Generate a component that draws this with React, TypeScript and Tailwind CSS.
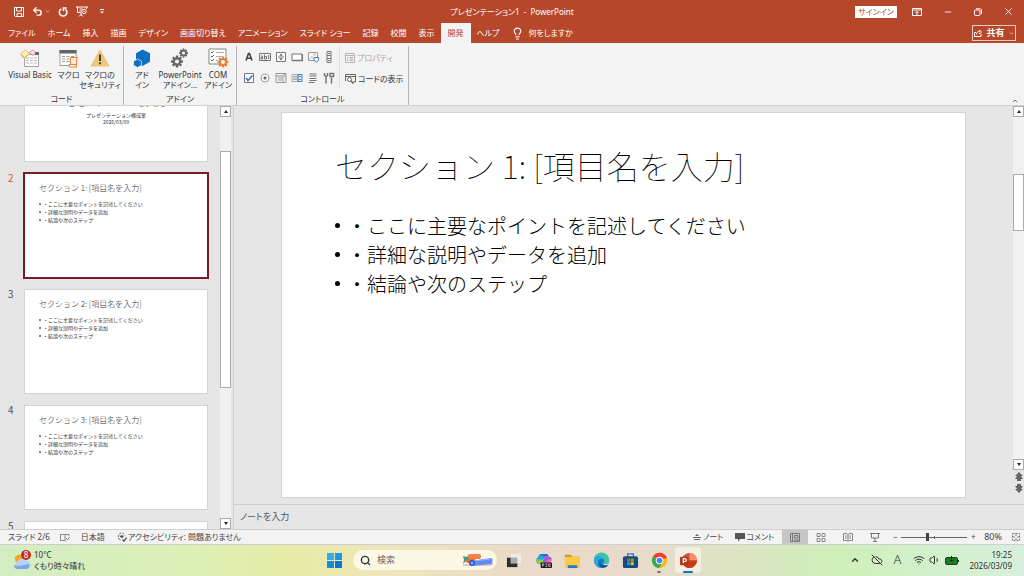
import type { ReactNode } from "react";
import clsx from "clsx";
import {
  ChevronDown,
  ChevronUp,
  CloudOff,
  Lightbulb,
  Minus,
  Search,
  Undo2,
  Volume1,
  Wifi,
  X,
} from "lucide-react";

const tabs = [
  "ファイル",
  "ホーム",
  "挿入",
  "描画",
  "デザイン",
  "画面切り替え",
  "アニメーション",
  "スライド ショー",
  "記録",
  "校閲",
  "表示",
  "開発",
  "ヘルプ",
];

const points = [
  "・ここに主要なポイントを記述してください",
  "・詳細な説明やデータを追加",
  "・結論や次のステップ",
];

const SaveIcon = () => (
  <svg viewBox="0 0 10 10" className="size-[10px]" fill="none" stroke="currentColor">
    <path d="M.5.5h9v9h-8l-1-1z" />
    <path d="M2.5.5v3.5h5V.5M3 9.500V6.500h4.500v3" />
  </svg>
);

const RedoIcon = () => (
  <svg viewBox="0 0 10 10" className="size-[10px]" fill="none" stroke="currentColor" strokeWidth="1.500">
    <path d="M3.200 2A3.800 3.800 0 1 0 7.500 2.300" />
    <path d="M5.500 4V1h3.200" />
  </svg>
);

const SlideShowIcon = () => (
  <svg viewBox="0 0 12 11" className="h-[11px] w-3" fill="none" stroke="currentColor">
    <path d="M0 1h12M1.500 1v5.500h3M10.500 1v2M3.500 3h3M3.500 5h2M5 6.500v3M3 10.500l2-2 2 2" />
    <circle cx="8" cy="5.500" r="2.200" />
    <path d="M7.500 4.500v2l1.500-1z" fill="currentColor" stroke="none" />
  </svg>
);

const VisualBasicIcon = () => (
  <svg viewBox="0 0 20 19" className="h-[19px] w-5">
    <path d="M4.500 5.500h14v12h-14z" fill="#fff" stroke="#a5a5a5" />
    <path d="M11 3h8v3h-8z" fill="#666" />
    <path d="M6 9h11M6 11.500h11M6 14h11" stroke="#b8b8b8" strokeDasharray="3 1" />
    <path d="M5.500 1l4 3.500-5 4.500-4-4z" fill="#fff3d6" stroke="#e8b85a" />
    <path d="M1 5.500L4.500 9 9 5" fill="none" stroke="#e8b85a" strokeWidth="1.500" />
    <path d="M11.500 1.500c2-1 4 1 3.500 3L13 6.500 9.500 3.500z" fill="#fbe3ea" stroke="#e0839e" />
  </svg>
);

const MacroIcon = () => (
  <svg viewBox="0 0 20 19" className="h-[19px] w-5">
    <path d="M1 1.500h16v15H1z" fill="#fff" stroke="#a0a0a0" />
    <path d="M.5 1h17v3.500H.5z" fill="#666" />
    <path d="M3 7.500h3M7.500 7.500h3M12 7.500h3M3 10h3M7.500 10h3M3 12.500h3M7.500 12.500h3" stroke="#999" />
    <path d="M11.500 8.500h7c-1 1.500-1 3-1 5.500v3.500h-6z" fill="#fdebdc" stroke="#e8823a" />
    <path d="M10 15.500h7c0 2 1 2.500 1 2.500h-7.500z" fill="#fff" stroke="#e8823a" />
  </svg>
);

const WarningIcon = () => (
  <svg viewBox="0 0 20 18" className="h-[18px] w-5">
    <path d="M10 1L19 17H1z" fill="#eec679" stroke="#eec679" strokeLinejoin="round" />
    <path d="M10 5.500V12M10 13.300v2" stroke="#333" strokeWidth="1.800" />
  </svg>
);

const AddInIcon = () => (
  <svg viewBox="0 0 18 19" className="h-[19px] w-[18px]" fill="#0f6fc5">
    <path d="M9.500.5L17 4.300v8.400L9.500 17 3 13V4.300z" />
    <path d="M4.500 10l4 2.200v4L4.500 18.500.500 16.200v-4z" stroke="#f3f3f3" strokeWidth=".7" />
  </svg>
);

const Cog = ({ x, y, r, color, hole }: { x: number; y: number; r: number; color: string; hole: string }) => (
  <g transform={`translate(${x} ${y})`}>
    {[0, 45, 90, 135].map((a) => (
      <rect key={a} x={-r} y={-r / 5} width={r * 2} height={r / 2.5} fill={color} transform={`rotate(${a})`} />
    ))}
    <circle r={r * 0.72} fill={color} />
    <circle r={r * 0.35} fill={hole} />
  </g>
);

const CogsIcon = () => (
  <svg viewBox="0 0 18 20" className="h-5 w-[18px]">
    <Cog x={6} y={13.5} r={6} color="#666" hole="#f3f3f3" />
    <Cog x={12.5} y={5} r={4.5} color="#666" hole="#f3f3f3" />
  </svg>
);

const ComIcon = () => (
  <svg viewBox="0 0 21 20" className="h-5 w-[21px]">
    <path d="M1 1h17v15H1z" fill="#fff" stroke="#888" />
    <path d="M3 4l1 1 2-2M3 8l1 1 2-2M3 12l1 1 2-2" fill="none" stroke="#666" />
    <path d="M8 4.500h8M8 8.500h6M8 12.500h2" stroke="#aaa" />
    <Cog x={15} y={14} r={5.5} color="#e8823a" hole="#fff" />
  </svg>
);

const controlIcons: { name: string; icon: ReactNode }[] = [
  { name: "label", icon: <path d="M3 9.500L5.500 2.500h1L9 9.500M4 7.300h4" stroke="#444" strokeWidth="1.600" /> },
  {
    name: "textbox",
    icon: (
      <>
        <path d="M.5 2.500h11v7H.5zM9.700 4v4" />
        <path d="M2 5h1.500v3H2V6.500h1.500M5.500 3.500V8h2V5.500h-2" />
      </>
    ),
  },
  {
    name: "spin",
    icon: (
      <>
        <path d="M1.500 1.500h9v9h-9z" fill="#fff" />
        <path d="M3 6h6M6 3L4.800 4.300h2.400zM6 9L4.800 7.700h2.400z" />
      </>
    ),
  },
  {
    name: "button",
    icon: (
      <>
        <path d="M1 3h10v6.500H1z" fill="#fff" />
        <path d="M1 9.500h10.500V3" strokeWidth="1.500" />
      </>
    ),
  },
  {
    name: "image",
    icon: (
      <>
        <path d="M1.500 1.500h9v8h-9z" fill="#fff" stroke="#999" />
        <path d="M2 8.500l3-3 3 3" stroke="#8db5dc" />
        <circle cx="7.500" cy="3.500" r=".8" stroke="#e8a05a" />
        <path d="M7 6.500h4.500v2.500l-2 2.200L7 9z" fill="#fff" stroke="#3c7fc0" />
      </>
    ),
  },
  { name: "scroll", icon: <path d="M4 .500h4v11H4zM5 3l1-1 1 1M5 9l1 1 1-1M4 4.500h4M4 7.500h4" /> },
  {
    name: "checkbox",
    icon: (
      <>
        <path d="M1.500 1.500h9v9h-9z" fill="#fff" />
        <path d="M3 6l2 2.500L9.500 3.500" stroke="#2e75b6" strokeWidth="1.500" />
      </>
    ),
  },
  {
    name: "option",
    icon: (
      <>
        <circle cx="6" cy="6" r="4" fill="#fff" stroke="#999" />
        <circle cx="6" cy="6" r="1.200" fill="#666" />
      </>
    ),
  },
  { name: "combo", icon: <path d="M1 1.500h10v9H1zM1 4h10M8 4v6.500M8.500 2.500h2M3 6h4M3 8h4" stroke="#999" /> },
  {
    name: "list",
    icon: (
      <>
        <path d="M1 2.500h6v7H1zM2 4.500h4M2 6h4M2 7.500h4" stroke="#aaa" />
        <path d="M7 2.500h4v7H7zM8 5l1-1 1 1M8 7l1 1 1-1" stroke="#3c7fc0" />
      </>
    ),
  },
  { name: "toggle", icon: <path d="M2.500 2h7M2.500 4h7M2.500 6.500h7M2.500 8.500h7M1.500 10.500h6" strokeWidth="1.200" /> },
  { name: "more", icon: <path d="M3 5v6.500M1.500 1v2.500L3 4.800l1.500-1.300V1M8.500 5.500V11.500M7 1.500h3.500v3H7z" strokeWidth="1.500" /> },
];

const PropertyIcon = () => (
  <svg viewBox="0 0 10 10" className="size-[10px]" fill="none" stroke="#b5b5b5">
    <path d="M.5.5h9v9h-9zM.5 2.500h9M2 4.500h1M4.500 4.500H8M2 6h1M4.500 6H8M2 7.500h1M4.500 7.500H8" />
  </svg>
);

const CodeIcon = () => (
  <svg viewBox="0 0 11 10" className="h-[10px] w-[11px]" fill="none" stroke="#666">
    <path d="M.5 7V.500h10V8H8M.5 2.500h10" />
    <circle cx="4.500" cy="5.500" r="2" fill="#fff" />
    <path d="M6 7l2.500 2.500" strokeWidth="1.500" />
  </svg>
);

type ToolProps = { icon: ReactNode; lines: string[]; className?: string };

const Tool = ({ icon, lines, className }: ToolProps) => (
  <button className={clsx("flex flex-col items-center whitespace-nowrap", className)}>
    <span className="flex h-6 items-center">{icon}</span>
    {lines.map((line) => (
      <span key={line} className="leading-[10px]">
        {line}
      </span>
    ))}
  </button>
);

const Group = ({ title, className, children }: { title: string; className?: string; children: ReactNode }) => (
  <section className={clsx("flex flex-col border-r border-[#b5b5b5]", className)}>
    <div className="flex h-[47px]">{children}</div>
    <h2 className="text-center leading-[12px]">{title}</h2>
  </section>
);

const TitleBar = () => (
  <header className="relative flex h-[23px] items-center justify-between text-white">
    <div className="flex items-center gap-2 pl-[14px]">
      <button aria-label="上書き保存"><SaveIcon /></button>
      <button aria-label="元に戻す" className="flex items-center">
        <Undo2 className="size-[11px]" strokeWidth={3} />
        <ChevronDown className="ml-[2px] size-[5px]" strokeWidth={3} />
      </button>
      <button aria-label="やり直し"><RedoIcon /></button>
      <button aria-label="スライドショー"><SlideShowIcon /></button>
      <button aria-label="クイック アクセス" className="pl-1">
        <svg viewBox="0 0 4 5" className="h-[5px] w-1" fill="currentColor">
          <path d="M0 0h4v1H0zM0 2.500h4L2 4.500z" />
        </svg>
      </button>
    </div>
    <h1 className="absolute left-1/2 -translate-x-1/2 text-[8px] whitespace-pre">プレゼンテーション1  -  PowerPoint</h1>
    <div className="flex items-center">
      <button className="mr-[15px] h-3 w-[42px] bg-white text-[8px] leading-3 text-[#b7472a]">サインイン</button>
      <button aria-label="リボンの表示オプション">
        <svg viewBox="0 0 10 8" className="h-2 w-[10px]" fill="none" stroke="currentColor">
          <path d="M.5.500h9v7h-9zM.5 2h9M5 7V3.500M3.500 5L5 3.500 6.500 5" />
        </svg>
      </button>
      <button aria-label="最小化" className="ml-[21px]"><Minus className="size-[10px]" /></button>
      <button aria-label="元のサイズに戻す" className="ml-[21px]">
        <svg viewBox="0 0 8 8" className="size-2" fill="none" stroke="currentColor">
          <rect x=".5" y="2" width="5.500" height="5.500" rx="1" />
          <path d="M2 .8h4.500l1 1V6" />
        </svg>
      </button>
      <button aria-label="閉じる" className="mr-[10px] ml-[21px]"><X className="size-[11px]" /></button>
    </div>
  </header>
);

const TabBar = () => (
  <nav className="flex h-5 items-stretch pr-2 pl-[2px] text-[8px] whitespace-nowrap text-white">
    {tabs.map((tab) => (
      <button
        key={tab}
        className={clsx(tab === "開発" ? "bg-[#f3f3f3] px-[7px] text-[#b7472a]" : "px-[6px]")}
      >
        {tab}
      </button>
    ))}
    <button className="flex items-center gap-1 pl-[6px]">
      <Lightbulb className="size-[13px]" />
      何をしますか
    </button>
    <button className="mt-[2px] ml-auto flex h-4 w-11 items-center justify-center gap-1 border border-white/70 text-[9px] font-bold">
      <svg viewBox="0 0 8 8" className="size-2" fill="none" stroke="currentColor">
        <path d="M2 3.500H.500v4h6.500V5M2.500 5.500c0-2 1-3 3-3V1l2 2-2 2V3.800" />
      </svg>
      共有
      <ChevronDown className="size-[5px]" strokeWidth={3} />
    </button>
  </nav>
);

const Ribbon = () => (
  <div className="flex h-[63px] border-b border-[#d2d2d2] bg-[#f3f3f3] pt-[3px] text-[8px] text-[#333]">
    <Group title="コード" className="w-[124px]">
      <Tool icon={<VisualBasicIcon />} lines={["Visual Basic"]} className="w-[60px]" />
      <Tool icon={<MacroIcon />} lines={["マクロ"]} className="w-4 flex-1" />
      <Tool icon={<WarningIcon />} lines={["マクロの", "セキュリティ"]} className="w-[46px]" />
    </Group>
    <Group title="アドイン" className="w-[113px]">
      <Tool icon={<AddInIcon />} lines={["アド", "イン"]} className="w-9" />
      <Tool icon={<CogsIcon />} lines={["PowerPoint", "アドイン..."]} className="w-10" />
      <Tool icon={<ComIcon />} lines={["COM", "アドイン"]} className="flex-1" />
    </Group>
    <Group title="コントロール" className="w-[172px]">
      <div className="grid grid-cols-6 gap-x-1 gap-y-[9px] self-start border-r border-[#dedede] py-[5px] pr-1 pl-[6px]">
        {controlIcons.map(({ name, icon }) => (
          <button key={name} aria-label={name}>
            <svg viewBox="0 0 12 12" className="size-3" fill="none" stroke="#777">
              {icon}
            </svg>
          </button>
        ))}
      </div>
      <div className="flex flex-col gap-[9px] pt-[6px] pl-[5px] whitespace-nowrap">
        <button disabled className="flex h-3 items-center gap-[2px] text-[#a6a6a6]">
          <PropertyIcon />
          プロパティ
        </button>
        <button className="flex h-3 items-center gap-[2px]">
          <CodeIcon />
          コードの表示
        </button>
      </div>
    </Group>
    <button aria-label="リボンを折りたたむ" className="mr-[5px] ml-auto self-end">
      <ChevronUp className="size-2" />
    </button>
  </div>
);

const ScrollButton = ({ up }: { up?: boolean }) => (
  <button
    aria-label={up ? "上へ" : "下へ"}
    className="flex h-[11px] w-full shrink-0 items-center justify-center border border-[#ababab] bg-white"
  >
    <svg viewBox="0 0 4 3" className="h-[3px] w-1">
      <path d={up ? "M0 3h4L2 0z" : "M0 0h4L2 3z"} fill="#222" />
    </svg>
  </button>
);

const Thumb = ({ no, selected, children }: { no: number; selected?: boolean; children?: ReactNode }) => (
  <li className="flex pr-[13px]">
    <span className={clsx("w-[25px] pl-2 text-[10px] leading-[8px]", selected ? "text-[#d8583a]" : "text-[#555]")}>
      {no}
    </span>
    <div
      className={clsx(
        "aspect-[182/103] min-w-0 flex-1 bg-white outline",
        selected ? "outline-2 outline-[#7a1a26]" : "outline-[#d4d4d4]",
      )}
    >
      {children}
    </div>
  </li>
);

const SectionThumb = ({ no }: { no: number }) => (
  <Thumb no={no} selected={no === 2}>
    <div className="pt-2 pl-[14px] text-[#333]">
      <h3 className="text-[8px] leading-3 font-light">セクション {no - 1}: [項目名を入力]</h3>
      <ul className="pt-[6px] text-[5px] leading-[8px]">
        {points.map((point) => (
          <li key={point} className="flex items-center gap-[2px]">
            <span className="size-[2px] rounded-full bg-[#555]" />
            {point}
          </li>
        ))}
      </ul>
    </div>
  </Thumb>
);

const SlideList = () => (
  <aside className="flex w-[234px] shrink-0 border-r border-[#cfcfcf] pr-[2px]">
    <ol className="-mt-12 flex min-w-0 flex-1 flex-col gap-[13px] font-['Noto_Sans_CJK_JP',sans-serif] [font-feature-settings:normal]">
      <Thumb no={1}>
        <div className="pt-[35px] text-center text-[#333]">
          <h3 className="text-[10px] leading-[18px] font-light">ここにタイトルを入力</h3>
          <p className="text-[5px] leading-[7px]">プレゼンテーション構成案</p>
          <p className="text-[5px] leading-[7px]">2026/03/09</p>
        </div>
      </Thumb>
      <SectionThumb no={2} />
      <SectionThumb no={3} />
      <SectionThumb no={4} />
      <Thumb no={5} />
    </ol>
    <div className="flex w-[11px] flex-col bg-[#f1f1f1]">
      <ScrollButton up />
      <div className="h-[34px]" />
      <div className="h-[237px] border border-[#ababab] bg-white" />
      <div className="flex-1" />
      <ScrollButton />
    </div>
  </aside>
);

const Editor = () => (
  <main className="flex min-w-0 flex-1 flex-col">
    <div className="flex min-h-0 flex-1 border-b border-[#cfcfcf]">
      <div className="flex-1 px-12 pt-[7px]">
        <article className="aspect-[683/384] bg-white pt-[30px] pl-[53px] font-['Noto_Sans_CJK_JP',sans-serif] text-black outline outline-[#d4d4d4] [font-feature-settings:normal]">
          <h2 className="text-[32px] leading-[44px] font-thin">セクション 1: [項目名を入力]</h2>
          <ul className="pt-6 text-[20px] leading-[29px] font-light">
            {points.map((point) => (
              <li key={point} className="flex items-center gap-[7px]">
                <span className="size-[5px] rounded-full bg-black" />
                {point}
              </li>
            ))}
          </ul>
        </article>
      </div>
      <div className="flex w-[11px] flex-col bg-[#f1f1f1]">
        <ScrollButton up />
        <div className="h-[57px]" />
        <div className="h-[57px] border border-[#ababab] bg-white" />
        <div className="flex-1" />
        <ScrollButton />
        <button aria-label="前後のスライド" className="flex h-[34px] justify-center bg-[#e6e6e6] pt-[2px]">
          <svg viewBox="0 0 8 21" className="h-[21px] w-2" fill="#666">
            <path d="M4 0l4 4H6l2 3H6v2H2V7H0l2-3H0zM2 12h4v2h2l-2 3h2l-4 4-4-4h2l-2-3h2z" />
          </svg>
        </button>
      </div>
    </div>
    <p className="h-6 pl-[6px] text-[9px] leading-[24px] text-[#555]">ノートを入力</p>
  </main>
);

const StatusBar = () => (
  <footer className="flex h-4 items-center border-y border-[#cfcfcf] bg-[#f3f3f3] pr-1 pl-2 text-[8px] whitespace-nowrap text-[#444]">
    <span>スライド 2/6</span>
    <svg viewBox="0 0 10 9" className="ml-[10px] h-[9px] w-[10px]" fill="none" stroke="#888">
      <path d="M5 1.500v6M5 1.500H.500v6H5l1 1M5 1.500h4v1.500M6 5l1.500 2L9.500 4" />
    </svg>
    <span className="ml-[11px]">日本語</span>
    <button className="ml-3 flex items-center gap-px">
      <svg viewBox="0 0 10 10" className="size-[10px]" fill="none" stroke="#555">
        <path d="M4 1A4 4 0 0 0 4 8.500M5.500 1.200A4 4 0 0 1 8 3.500" strokeDasharray="2 1" />
        <path d="M3 4.500h3.500M5 3v3M5.500 7.500l1.500 1.700L9.500 5.500" strokeWidth="1.300" />
      </svg>
      アクセシビリティ: 問題ありません
    </button>
    <button className="ml-auto flex items-center gap-[2px]">
      <svg viewBox="0 0 8 7" className="h-[7px] w-2" fill="#666">
        <path d="M0 3h8v1H0zM1 5h6v1H1zM4 0l2 2H2z" />
      </svg>
      ノート
    </button>
    <button className="ml-3 flex items-center gap-px">
      <svg viewBox="0 0 10 9" className="h-[9px] w-[10px]" fill="#555">
        <path d="M0 0h10v6H5L3 8.500V6H0z" />
      </svg>
      コメント
    </button>
    <button aria-label="標準" className="ml-2 flex h-[14px] w-[26px] items-center justify-center bg-[#c6c6c6]">
      <svg viewBox="0 0 10 9" className="h-[9px] w-[10px]" fill="none" stroke="#777">
        <path d="M.5.500h9v8h-9zM2.500.500v8M4.500 2.500h3.500v2.500H4.500zM4 7h5" />
      </svg>
    </button>
    <button aria-label="スライド一覧" className="ml-2">
      <svg viewBox="0 0 10 9" className="h-[9px] w-[10px]" fill="none" stroke="#888">
        <path d="M1 .500h3v3H1zM6 .500h3v3H6zM1 5.500h3v3H1zM6 5.500h3v3H6z" />
      </svg>
    </button>
    <button aria-label="閲覧表示" className="ml-[17px]">
      <svg viewBox="0 0 10 9" className="h-[9px] w-[10px]" fill="none" stroke="#888">
        <path d="M5 1v7.500M.5.500H4l1 1 1-1h3.500v7H6l-1 1-1-1H.500zM2 3h2M2 5h2M6 3h2M6 5h2" />
      </svg>
    </button>
    <button aria-label="スライドショー" className="ml-[17px]">
      <svg viewBox="0 0 10 9" className="h-[9px] w-[10px]" fill="none" stroke="#777">
        <path d="M0 .500h10M1.500.500v4.500h7V.500M5 5v3M3 8.500h4" />
      </svg>
    </button>
    <button aria-label="縮小" className="ml-3 w-[6px]">−</button>
    <label className="relative mx-[3px] flex h-3 w-[66px] items-center">
      <span className="h-px w-full bg-[#666]" />
      <span className="absolute left-[33px] h-[3px] w-px bg-[#666]" />
      <span className="absolute left-[25px] h-2 w-[3px] bg-[#444]" />
      <input type="range" min="10" max="400" defaultValue="80" aria-label="ズーム" className="absolute inset-0 w-full opacity-0" />
    </label>
    <button aria-label="拡大" className="w-[6px]">+</button>
    <span className="ml-2 text-[9px]">80%</span>
    <button aria-label="ウィンドウに合わせる" className="ml-[10px]">
      <svg viewBox="0 0 8 8" className="size-2" fill="none" stroke="#777">
        <path d="M.5.500h7v7h-7zM4 1v2M4 5v2M1 4h2M5 4h2" strokeDasharray="2 1" />
      </svg>
    </button>
  </footer>
);

const taskApps: { name: string; icon: ReactNode }[] = [
  {
    name: "タスク ビュー",
    icon: (
      <>
        <path d="M1 6h11v10H1z" fill="#2c2c2c" />
        <path d="M5 2h11v10H5z" fill="#f3f0ea" fillOpacity=".8" />
        <path d="M5 6h7v6H5z" fill="#aaa" />
      </>
    ),
  },
  {
    name: "Copilot",
    icon: (
      <>
        <path d="M5 2h6L8 12H4C1 12 1 9 2 7z" fill="#1ba7dd" />
        <path d="M2 8h7l-1 5H5c-4 0-4-2-3-5z" fill="#8ecb4a" />
        <path d="M5 2h7c2 0 2 2 3 3h-5z" fill="#2b62d4" />
        <path d="M10 5h5c3 0 3 3 2 5l-2 5H7z" fill="#a55be0" />
        <path d="M13 8h4.500l-2 6H10z" fill="#ee6fa0" />
        <rect x="6" y="11" width="12" height="6" rx="1" fill="#1c1c1c" />
        <path d="M8 15.500v-3h1.500V14H8M11 12.500h1.500v3H11M14.500 12.500H16v3h-1.500z" stroke="#fff" strokeWidth=".6" fill="none" />
      </>
    ),
  },
  {
    name: "エクスプローラー",
    icon: (
      <>
        <path d="M1 3h6l2 2h8v5H1z" fill="#d9960e" />
        <rect x="1" y="5" width="16" height="12" rx="1" fill="#fccb46" />
        <path d="M4 17v-3h10v3z" fill="#1c7fc9" />
      </>
    ),
  },
  {
    name: "Edge",
    icon: (
      <>
        <circle cx="9" cy="9" r="8" fill="#1478c8" />
        <path d="M1 8a8 8 0 0 1 16 1c0 3-3 4-6 3 2-3 0-6-3-6-4 0-6 1-7 3z" fill="#3cc5a4" />
        <path d="M1 8c2-5 9-5 10 0-4-2-8 1-4 8C3 15 1 12 1 8z" fill="#2aa5df" />
        <path d="M8 9c-2 4 3 7 8 4l-1 2c-3 3-9 1-8-4z" fill="#0c4f91" />
        <path d="M10 12c2 1 5 1 6.500-.5l-1 2c-2 1-5 0-5.500-1.500z" fill="#eadfce" />
      </>
    ),
  },
  {
    name: "Microsoft Store",
    icon: (
      <>
        <path d="M6 5V2h6v3" fill="none" stroke="#2a79c4" strokeWidth="1.500" />
        <rect x="1" y="4.500" width="16" height="12.500" rx="2" fill="#134b87" />
        <path d="M5.500 7h3.200v3.200H5.500z" fill="#f25022" />
        <path d="M9.300 7h3.200v3.200H9.300z" fill="#7fba00" />
        <path d="M5.500 10.800h3.200V14H5.500z" fill="#00a4ef" />
        <path d="M9.300 10.800h3.200V14H9.300z" fill="#ffb900" />
      </>
    ),
  },
  {
    name: "Chrome",
    icon: (
      <>
        <circle cx="9" cy="9" r="8" fill="#fbbc05" />
        <path d="M9 9L2 5a8 8 0 0 1 14.900 2H9z" fill="#ea4335" />
        <path d="M2 5a8 8 0 0 0 6.500 12l4-6L9 9z" fill="#34a853" />
        <circle cx="9" cy="9" r="4" fill="#fff" />
        <circle cx="9" cy="9" r="3" fill="#4285f4" />
      </>
    ),
  },
  {
    name: "PowerPoint",
    icon: (
      <>
        <circle cx="10" cy="9" r="8" fill="#d35230" />
        <path d="M10 1a8 8 0 0 1 8 8h-8z" fill="#ff8f6b" />
        <path d="M2 9h16a8 8 0 0 1-8 8c-4 0-7-3-8-8z" fill="#c43e1c" />
        <rect x="0" y="5" width="9" height="9" rx="1" fill="#b7331a" />
        <path d="M3.500 12V7h1.800a1.400 1.400 0 0 1 0 3H3.500" fill="none" stroke="#fff" strokeWidth="1.200" />
      </>
    ),
  },
];

const TaskBar = () => (
  <div className="relative flex h-[31px] items-center justify-between bg-[linear-gradient(90deg,#d3edc4_0%,#ddf0b4_20%,#e6eba6_28%,#efe6bb_38%,#ead9ca_52%,#e8dccb_64%,#dbe6c2_73%,#cfefb9_82%,#d2f1cc_91%,#d7efdc_100%)] pb-px text-[8px] text-[#333]">
    <button className="flex items-center gap-[2px] pl-3 text-left">
      <svg viewBox="0 0 20 20" className="size-5">
        <path d="M2 8l6-4 1 6z" fill="#f5a623" />
        <circle cx="7" cy="9" r="4" fill="#f5a623" />
        <path d="M5 19a4 4 0 0 1 0-7 5 5 0 0 1 9-1 4 4 0 0 1 1 8z" fill="#b9d3f8" />
        <path d="M5 19a4 4 0 0 1-3-4c4 2 9 0 15-1a4 4 0 0 1-2 5z" fill="#7aa7ec" />
        <circle cx="14" cy="5" r="5" fill="#c42b1c" />
        <text x="14" y="8" textAnchor="middle" fontSize="8" fill="#fff">8</text>
      </svg>
      <span className="leading-[11px]">
        10°C
        <br />
        くもり時々晴れ
      </span>
    </button>
    <div className="absolute left-1/2 flex -translate-x-1/2 items-center pl-1">
      <button aria-label="スタート" className="mr-[11px] grid grid-cols-2 gap-px">
        <span className="size-[7px] bg-[#37a8ec]" />
        <span className="size-[7px] bg-[#2196e3]" />
        <span className="size-[7px] bg-[#1b8ade]" />
        <span className="size-[7px] bg-[#0f74cf]" />
      </button>
      <label className="flex h-5 w-36 items-center gap-[6px] rounded-full bg-[#fbf8e6] pr-[3px] pl-[7px]">
        <Search className="size-[11px]" strokeWidth={3} />
        <input type="search" placeholder="検索" className="w-10 flex-1 bg-transparent text-[9px] outline-none placeholder:text-[#666]" />
        <svg viewBox="0 0 32 14" className="h-[14px] w-8">
          <path d="M1 3l4 1 2-3v3l3 1-3 1 2 3-4-2-4 4 1-4z" fill="#35a37a" />
          <rect x="6" y="1" width="13" height="5" rx="2" fill="#ef8248" />
          <rect x="4" y="6" width="10" height="4" rx="2" fill="#e96a35" />
          <path d="M1 12h27l3-1" fill="none" stroke="#e58aa6" />
          <path d="M9 8l20-3c2 0 2 5 0 6L10 13z" fill="#5b8df5" />
          <path d="M12 8l17-2" stroke="#92b8ff" />
          <circle cx="10" cy="10" r="3" fill="#3156c9" />
          <circle cx="10" cy="10" r="1.500" fill="#89a9f5" />
        </svg>
      </label>
      <div className="ml-1 flex gap-[3px]">
        {taskApps.map(({ name, icon }) => (
          <button
            key={name}
            aria-label={name}
            className={clsx(
              "relative flex h-[26px] w-[26px] items-center justify-center rounded",
              name === "PowerPoint" && "bg-white/50",
            )}
          >
            <svg viewBox="0 0 18 18" className="size-[17px]">
              {icon}
            </svg>
            {name === "PowerPoint" && <span className="absolute bottom-0 h-[2px] w-[10px] rounded bg-[#0f74cf]" />}
            {name === "Chrome" && <span className="absolute bottom-0 h-[2px] w-1 rounded bg-[#777]" />}
          </button>
        ))}
      </div>
    </div>
    <div className="flex items-center pr-3">
      <ChevronUp className="mr-[11px] size-[10px]" strokeWidth={3} />
      <CloudOff className="mr-[11px] size-3" strokeWidth={2} />
      <span className="mr-3 text-[13px] font-light">A</span>
      <Wifi className="mr-1 size-3" />
      <Volume1 className="mr-1 size-3" />
      <svg viewBox="0 0 14 9" className="mr-[10px] h-[9px] w-[14px]">
        <rect x=".5" y="1.500" width="12" height="7" rx="1.500" fill="#16831f" stroke="#333" />
        <path d="M13.500 4v2" stroke="#333" />
        <path d="M6.500 0v5M4.500 3.500l2 2 2-2" fill="none" stroke="#222" />
      </svg>
      <span className="text-right leading-[11px]">
        19:25
        <br />
        2026/03/09
      </span>
    </div>
  </div>
);

const App = () => {
  return (
    <div className="flex h-screen flex-col overflow-hidden bg-[#e6e6e6] font-['Noto_Sans','Noto_Sans_CJK_JP',sans-serif] [font-feature-settings:'palt']">
      <div className="bg-[#b7472a]">
        <TitleBar />
        <TabBar />
      </div>
      <Ribbon />
      <div className="flex min-h-0 flex-1 overflow-hidden">
        <SlideList />
        <Editor />
      </div>
      <StatusBar />
      <TaskBar />
    </div>
  );
};

export default App;
